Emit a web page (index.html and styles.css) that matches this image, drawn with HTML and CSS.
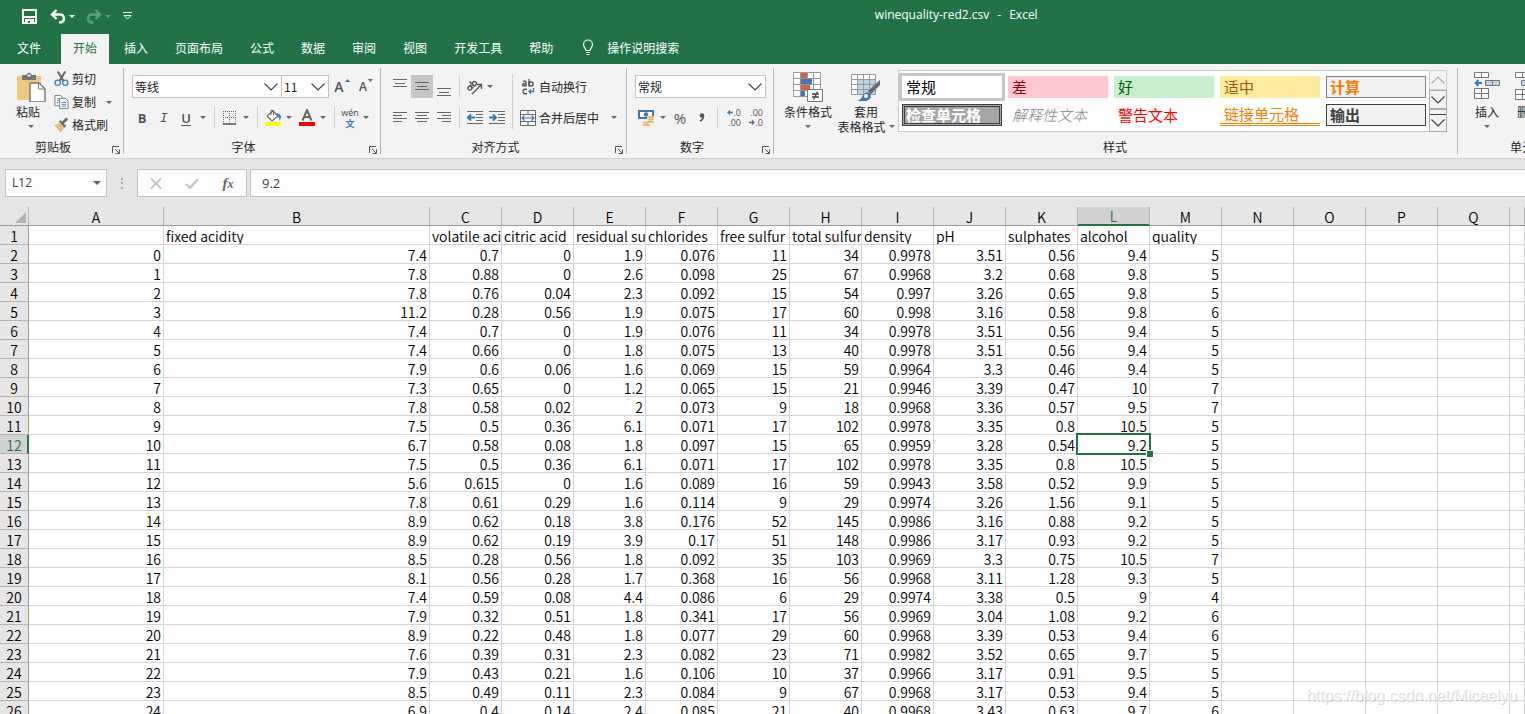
FILE: index.html
```html
<!DOCTYPE html>
<html lang="zh-CN">
<head>
<meta charset="utf-8">
<title>winequality-red2.csv - Excel</title>
<link rel="stylesheet" href="styles.css">
</head>
<body>
<div class="app">
  <header class="titlebar">
    <div class="quick">
      <button class="quick-btn save" aria-label="保存"><svg width="15" height="15" viewBox="0 0 15 15"><path d="M1 1h13v13H1z" fill="none" stroke="#fff" stroke-width="2"/><path d="M1 8h13M4 11h7v3H4z" stroke="#fff" stroke-width="2" fill="#fff"/><path d="M6 12h2v2H6z" fill="#217346"/></svg></button>
      <button class="quick-btn" aria-label="撤消"><svg width="16" height="15" viewBox="0 0 16 15"><path d="M6.500 1L2 5.500 6.500 10M2 5.500h7.500q4.500 0 4.500 4t-5 4" fill="none" stroke="#fff" stroke-width="2.400"/></svg><i class="caret light"></i></button>
      <button class="quick-btn faded" aria-label="恢复"><svg width="16" height="15" viewBox="0 0 16 15"><path d="M9.500 1L14 5.500 9.500 10M14 5.500H6.500q-4.500 0-4.500 4t5 4" fill="none" stroke="#fff" stroke-width="2.400"/></svg><i class="caret light"></i></button>
      <button class="quick-btn more" aria-label="自定义"><svg width="9" height="8" viewBox="0 0 9 8"><path d="M0 .5h9M1 3.500h7L4.500 7z" fill="none" stroke="#fff"/></svg></button>
    </div>
    <div class="title">winequality-red2.csv<span>-</span>Excel</div>
  </header>

  <nav class="tabs">
    <button class="tab file">文件</button>
    <button class="tab active">开始</button>
    <button class="tab">插入</button>
    <button class="tab">页面布局</button>
    <button class="tab">公式</button>
    <button class="tab">数据</button>
    <button class="tab">审阅</button>
    <button class="tab">视图</button>
    <button class="tab">开发工具</button>
    <button class="tab">帮助</button>
    <button class="tab tell"><svg width="12" height="17" viewBox="0 0 12 17"><path d="M4 11.500c0-2-2.500-3-2.500-6a4.500 4.500 0 0 1 9 0c0 3-2.500 4-2.500 6zM4 13.500h4M4.500 15.500h3" fill="none" stroke="#fff" stroke-width="1.200"/></svg>操作说明搜索</button>
  </nav>

  <section class="ribbon">
    <div class="group clipboard">
      <div class="group-body">
        <button class="big paste"><svg width="30" height="30" viewBox="0 0 30 30"><path d="M1 4h24v24H1z" fill="#edc87e"/><path d="M6 3h4q3-5 6 0h4v5H6z" fill="#767676"/><path d="M11.500 2.500h3v2h-3z" fill="#f3f3f3"/><path d="M14 11h9l6 6v13H14z" fill="#fff" stroke="#767676" stroke-width="1.400"/><path d="M22.500 11v6H29" fill="none" stroke="#767676"/></svg><span>粘贴</span><i class="caret"></i></button>
        <div class="stack">
          <button class="small"><svg width="15" height="16" viewBox="0 0 16 16"><path d="M4 0l6 10M12 0L6 10" stroke="#6b6b6b" stroke-width="2.200"/><circle cx="4" cy="12" r="2.800" fill="none" stroke="#4a7ebb" stroke-width="1.500"/><circle cx="12" cy="12" r="2.800" fill="none" stroke="#4a7ebb" stroke-width="1.500"/></svg>剪切</button>
          <button class="small"><svg width="15" height="16" viewBox="0 0 16 16"><path d="M1 1h6l2 2v9H1z" fill="#fff" stroke="#767676"/><path d="M6 4h6l3 3v8H6z" fill="#fff" stroke="#767676"/><path d="M3 4.500h3M3 6.500h2M3 8.500h2M8 8.500h5M8 10.500h5M8 12.500h5" stroke="#4a7ebb"/></svg>复制<i class="caret gap"></i></button>
          <button class="small"><svg width="15" height="16" viewBox="0 0 16 16"><path d="M0 8l6-2 5 5-4 5z" fill="#edc07a"/><path d="M5 4l2-1 6 6-2 2z" fill="#6b6b6b"/><path d="M9 6l5-5" stroke="#6b6b6b" stroke-width="3"/></svg>格式刷</button>
        </div>
      </div>
      <div class="group-label">剪贴板</div>
      <button class="launcher" aria-label="剪贴板设置"><svg width="8" height="8" viewBox="0 0 8 8"><path d="M.5 7V.5H7M3 3l4 4M7.500 3.500v4h-4" fill="none" stroke="#555"/></svg></button>
    </div>

    <div class="group font">
      <div class="group-body rows">
        <div class="row">
          <label class="combo font-name"><select aria-label="字体"><option>等线</option></select><svg width="14" height="8" viewBox="0 0 14 8"><path d="M.5.5L7 7 13.500.5" fill="none" stroke="#444" stroke-width="1.200"/></svg></label>
          <label class="combo font-size"><select aria-label="字号"><option>11</option></select><svg width="14" height="8" viewBox="0 0 14 8"><path d="M.5.5L7 7 13.500.5" fill="none" stroke="#444" stroke-width="1.200"/></svg></label>
          <button class="tool grow" aria-label="增大字号">A<svg width="5" height="3" viewBox="0 0 5 3"><path d="M0 3L2.500 0 5 3z" fill="#3f6fa8"/></svg></button>
          <button class="tool grow shrink" aria-label="减小字号">A<svg width="5" height="3" viewBox="0 0 5 3"><path d="M0 0h5L2.500 3z" fill="#3f6fa8"/></svg></button>
        </div>
        <div class="row">
          <button class="tool letter"><b>B</b></button>
          <button class="tool letter"><em>I</em></button>
          <button class="tool letter"><u>U</u></button><i class="caret cell"></i>
          <span class="sep"></span>
          <button class="tool narrow" aria-label="边框"><svg width="14" height="14" viewBox="0 0 14 14"><path d="M.5 0v13M6.500 0v13M12.500 0v13M0 .5h13M0 6.500h13" stroke="#666" stroke-dasharray="1 1"/><path d="M0 13h13" stroke="#555" stroke-width="1.500"/></svg></button><i class="caret cell"></i>
          <span class="sep"></span>
          <button class="tool narrow" aria-label="填充颜色"><svg width="17" height="17" viewBox="0 0 17 17"><path d="M8 2l5 5-6 5-5-5z" fill="#fff" stroke="#666" stroke-width="1.200"/><path d="M6 6V1.500h2.500V6" fill="none" stroke="#666"/><path d="M12 4q4 1 4 4l-1 4q-1-4-3-5z" fill="#4a7ebb"/><path d="M0 13h16v4H0z" fill="#ff0"/></svg></button><i class="caret cell"></i>
          <button class="tool narrow after" aria-label="字体颜色"><svg width="16" height="17" viewBox="0 0 16 17"><path d="M3.500 11.500L8 1l4.500 10.500M5 8h6" fill="none" stroke="#666" stroke-width="2"/><path d="M0 13h16v4H0z" fill="#f00"/></svg></button><i class="caret cell"></i>
          <span class="sep"></span>
          <button class="tool narrow pinyin"><span>wén</span><strong>文</strong></button><i class="caret cell"></i>
        </div>
      </div>
      <div class="group-label">字体</div>
      <button class="launcher" aria-label="字体设置"><svg width="8" height="8" viewBox="0 0 8 8"><path d="M.5 7V.5H7M3 3l4 4M7.500 3.500v4h-4" fill="none" stroke="#555"/></svg></button>
    </div>

    <div class="group align">
      <div class="group-body">
        <div class="rows">
          <div class="row">
            <button class="tool" aria-label="顶端对齐"><svg class="high" width="14" height="9" viewBox="0 0 14 9"><path d="M0 .5h14M2 4.500h10M0 7.500h14" stroke="#666"/></svg></button>
            <button class="tool pressed" aria-label="垂直居中"><svg width="14" height="9" viewBox="0 0 14 9"><path d="M0 .5h14M2 4.500h10M0 7.500h14" stroke="#666"/></svg></button>
            <button class="tool" aria-label="底端对齐"><svg class="low" width="14" height="9" viewBox="0 0 14 9"><path d="M0 .5h14M2 4.500h10M0 7.500h14" stroke="#666"/></svg></button>
            <span class="sep tight"></span>
            <button class="tool narrow" aria-label="方向"><svg width="17" height="16" viewBox="0 0 17 16"><g fill="none" stroke="#555" stroke-width="1.400"><g transform="rotate(-45 6 7)"><circle cx="3" cy="7" r="2"/><path d="M5.300 4.500v5M7.500 2v7.500"/><circle cx="9.500" cy="7" r="2"/></g><path d="M6 15L15 6M11 5.500h4.500V10"/></g></svg></button><i class="caret cell"></i>
          </div>
          <div class="row">
            <button class="tool" aria-label="左对齐"><svg width="14" height="11" viewBox="0 0 14 11"><path d="M0 .5h14M0 3.500h9M0 6.500h14M0 9.500h9" stroke="#666"/></svg></button>
            <button class="tool" aria-label="居中"><svg width="14" height="11" viewBox="0 0 14 11"><path d="M0 .5h14M2 3.500h10M0 6.500h14M2 9.500h10" stroke="#666"/></svg></button>
            <button class="tool" aria-label="右对齐"><svg width="14" height="11" viewBox="0 0 14 11"><path d="M0 .5h14M5 3.500h9M0 6.500h14M5 9.500h9" stroke="#666"/></svg></button>
            <span class="sep tight"></span>
            <button class="tool" aria-label="减少缩进"><svg width="16" height="14" viewBox="0 0 16 14"><path d="M0 .5h16M9 3.500h7M9 6.500h7M9 9.500h7M0 12.500h16" stroke="#666"/><path d="M8 6.500H1M4 3.500l-3 3 3 3" fill="none" stroke="#3b76b5" stroke-width="2"/></svg></button>
            <button class="tool" aria-label="增加缩进"><svg width="16" height="14" viewBox="0 0 16 14"><path d="M0 .5h16M9 3.500h7M9 6.500h7M9 9.500h7M0 12.500h16" stroke="#666"/><path d="M0 6.500h7M4 3.500l3 3-3 3" fill="none" stroke="#3b76b5" stroke-width="2"/></svg></button>
          </div>
        </div>
        <span class="sep tall"></span>
        <div class="rows">
          <button class="small wide"><svg width="16" height="16" viewBox="0 0 16 16"><g fill="none" stroke="#555" stroke-width="1.400"><path d="M3 2.500q3-1 3 1V7.500M6 4.500q-3.500 0-3.500 1.500t3.500.5M9 0v7.500"/><circle cx="11" cy="5" r="2"/><path d="M7 10.500q-4-1-4 2t4 2"/></g><path d="M13.500 9v3.500H9.500M11 10.500l-2 2 2 2" fill="none" stroke="#3b76b5" stroke-width="1.300"/></svg>自动换行</button>
          <button class="small wide"><svg width="16" height="16" viewBox="0 0 16 16"><path d="M.5.500h15v15H.5zM.5 4.500h15M.5 11.500h15M8 0v4M8 12v4" fill="#fff" stroke="#666"/><path d="M2 8h12M4.500 5.500L2 8l2.500 2.500M11.500 5.500L14 8l-2.500 2.500" fill="none" stroke="#3b76b5" stroke-width="1.200"/></svg>合并后居中<i class="caret gap"></i></button>
        </div>
      </div>
      <div class="group-label">对齐方式</div>
      <button class="launcher" aria-label="对齐设置"><svg width="8" height="8" viewBox="0 0 8 8"><path d="M.5 7V.5H7M3 3l4 4M7.500 3.500v4h-4" fill="none" stroke="#555"/></svg></button>
    </div>

    <div class="group number">
      <div class="group-body rows">
        <label class="combo number-format"><select aria-label="数字格式"><option>常规</option></select><svg width="14" height="8" viewBox="0 0 14 8"><path d="M.5.5L7 7 13.500.5" fill="none" stroke="#444" stroke-width="1.200"/></svg></label>
        <div class="row">
          <button class="tool" aria-label="会计数字格式"><svg width="17" height="16" viewBox="0 0 17 16"><path d="M1 1h14v7H1z" fill="#fff" stroke="#3b76b5" stroke-width="2"/><circle cx="8" cy="4.500" r="2.200" fill="#3b76b5"/><path d="M9 6h8v8H9z" fill="#f3f3f3"/><g fill="#e8b96a"><ellipse cx="12.500" cy="7" rx="3.500" ry="1.200"/><ellipse cx="12.500" cy="9.500" rx="3.500" ry="1"/><ellipse cx="12.500" cy="12" rx="3.500" ry="1"/><ellipse cx="8" cy="12.500" rx="3.500" ry="1"/><ellipse cx="8.500" cy="15" rx="4" ry="1"/></g></svg></button><i class="caret cell"></i>
          <button class="tool percent">%</button>
          <button class="tool" aria-label="千位分隔样式"><svg width="6" height="9" viewBox="0 0 6 9"><circle cx="3" cy="2.500" r="2.300" fill="#555"/><path d="M4.500 2.500q0 4-3.500 5.500" fill="none" stroke="#555" stroke-width="1.500"/></svg></button>
          <span class="sep tight"></span>
          <button class="tool decimal"><span><svg width="6" height="5" viewBox="0 0 6 5"><path d="M6 2.500H1M3 .5l-2 2 2 2" fill="none" stroke="#3b76b5" stroke-width="1.300"/></svg>.0</span><span>.00</span></button>
          <button class="tool decimal"><span>.00</span><span><svg width="6" height="5" viewBox="0 0 6 5"><path d="M0 2.500h5M3 .5l2 2-2 2" fill="none" stroke="#3b76b5" stroke-width="1.300"/></svg>.0</span></button>
        </div>
      </div>
      <div class="group-label">数字</div>
      <button class="launcher" aria-label="数字设置"><svg width="8" height="8" viewBox="0 0 8 8"><path d="M.5 7V.5H7M3 3l4 4M7.500 3.500v4h-4" fill="none" stroke="#555"/></svg></button>
    </div>

    <div class="group styles">
      <div class="group-body">
        <button class="big cond"><svg width="30" height="30" viewBox="0 0 30 30"><path d="M.5.500h27v24H.5z" fill="#fff"/><path d="M.5.500h27v24H.5zM0 6.500h28M0 12.500h28M0 18.500h28M7.500 0v25M14.500 0v6M20.500 0v25" fill="none" stroke="#999"/><path d="M8 1h6v5H8zM8 13h9v5H8z" fill="#d9603f"/><path d="M8 7h11v5H8zM8 19h4v5H8z" fill="#3f78b5"/><path d="M14.500 17.500h15v12h-15z" fill="#fff" stroke="#777"/><path d="M19 22h7M19 25h7M24.500 19.500l-4 8" stroke="#444" stroke-width="1.300"/></svg><span>条件格式</span><i class="caret"></i></button>
        <button class="big format"><svg width="30" height="30" viewBox="0 0 30 30"><path d="M.5 2.500h24v20H.5z" fill="#fff"/><path d="M7 8h18v15H7z" fill="#bdd3ea"/><path d="M.5 2.500h24v20H.5zM0 7.500h25M0 12.500h25M0 17.500h25M6.500 2v21M12.500 2v21M18.500 2v21" fill="none" stroke="#999"/><path d="M29 8v5l-9 9-3-3z" fill="#6b6b6b"/><path d="M6 29q4-1 6-6 2-4 7-2 3 6-4 8z" fill="#3f78b5"/><circle cx="15" cy="24" r="2" fill="#fff"/></svg><span>套用</span><span class="second">表格格式<i class="caret"></i></span></button>
        <div class="gallery">
          <div class="swatches">
            <button class="swatch normal">常规</button>
            <button class="swatch bad">差</button>
            <button class="swatch good">好</button>
            <button class="swatch neutral">适中</button>
            <button class="swatch calc">计算</button>
            <button class="swatch check">检查单元格</button>
            <button class="swatch explain">解释性文本</button>
            <button class="swatch warn">警告文本</button>
            <button class="swatch linked">链接单元格</button>
            <button class="swatch output">输出</button>
          </div>
          <div class="scroller">
            <button class="scroll off" aria-label="上一行"><svg width="14" height="8" viewBox="0 0 14 8"><path d="M.5 7.500L7 1l6.500 6.500" fill="none" stroke="#aaa" stroke-width="1.200"/></svg></button>
            <button class="scroll" aria-label="下一行"><svg width="14" height="8" viewBox="0 0 14 8"><path d="M.5.500L7 7 13.500.5" fill="none" stroke="#444" stroke-width="1.200"/></svg></button>
            <button class="scroll" aria-label="其他"><svg width="16" height="13" viewBox="0 0 16 13"><path d="M0 .5h16M1.500 5.500L8 12l6.500-6.500" fill="none" stroke="#444" stroke-width="1.200"/></svg></button>
          </div>
        </div>
      </div>
      <div class="group-label">样式</div>
    </div>

    <div class="group cells">
      <div class="group-body">
        <button class="big cell-btn"><svg width="28" height="30" viewBox="0 0 28 30"><path d="M1.500.500h14v5h-14zM8.500.500v5M1.500 16.500h14v10h-14zM1.500 21.500h14M8.500 16.500v10" fill="#fff" stroke="#777"/><path d="M12.500 8.500h14v5h-14zM19.500 8.500v5" fill="#bdd3ea" stroke="#777"/><path d="M9 11H3M5.500 8L2.500 11l3 3" fill="none" stroke="#3b76b5" stroke-width="1.800"/></svg><span>插入</span><i class="caret"></i></button>
        <button class="big cell-btn"><svg width="28" height="30" viewBox="0 0 28 30"><path d="M.5.500h14v5h-14zM7.500.500v5M.5 17.500h14v10h-14zM.5 22.500h14M7.500 17.500v10" fill="#fff" stroke="#777"/><path d="M6.500 8.500h14v5h-14z" fill="#bdd3ea" stroke="#777"/></svg><span>删除</span><i class="caret"></i></button>
      </div>
      <div class="group-label">单元格</div>
    </div>
  </section>

  <section class="formula-bar">
    <div class="name-box"><input type="text" value="L12" aria-label="名称框"><i class="caret big-caret"></i></div>
    <svg class="grip" width="2" height="11" viewBox="0 0 2 11"><path d="M0 0h2v2H0zM0 4h2v2H0zM0 9h2v2H0z" fill="#a8a8a8"/></svg>
    <div class="fx-box">
      <button aria-label="取消"><svg width="12" height="11" viewBox="0 0 12 11"><path d="M1 .5l10 10M11 .5l-10 10" stroke="#c4c4c4" stroke-width="1.800"/></svg></button>
      <button aria-label="输入"><svg width="14" height="11" viewBox="0 0 14 11"><path d="M1 6l4 4 8-9" fill="none" stroke="#c4c4c4" stroke-width="2.400"/></svg></button>
      <button class="fx">f<small>x</small></button>
    </div>
    <input class="formula" type="text" value="9.2" aria-label="编辑栏">
  </section>

  <main class="sheet">
    <table class="grid">
      <colgroup><col class="c-head"><col class="c-a"><col class="c-b"><col span="15" class="c-n"><col></colgroup>
      <thead><tr id="letters"></tr></thead>
      <tbody id="rows"></tbody>
    </table>
  </main>
  <div class="watermark">https://blog.csdn.net/Micaelyu</div>
</div>
<script src="sheet.js"></script>
</body>
</html>
```

FILE: styles.css
```css
* { box-sizing: border-box; }

body {
  margin: 0;
  overflow: hidden;
  font: 12px/16px "Noto Sans CJK SC", sans-serif;
  color: #262626;
  background: #e6e6e6;
}

button, input, select {
  font: inherit;
  color: inherit;
  margin: 0;
  padding: 0;
  border: 0;
  background: none;
  border-radius: 0;
}

button { white-space: nowrap; }
svg { display: block; flex: none; }

.app {
  position: relative;
  height: 100vh;
  display: flex;
  flex-direction: column;
  overflow: hidden;
}

.caret {
  display: block;
  flex: none;
  width: 0;
  height: 0;
  border: 3px solid transparent;
  border-top-color: #666;
  border-bottom: 0;
}
.caret.light { border-top-color: #fff; }
.caret.cell { margin: 0 3px; }
.caret.gap { margin-left: 7px; }

/* title bar */
.titlebar {
  flex: none;
  height: 34px;
  display: flex;
  align-items: center;
  background: #217346;
  color: #fff;
}
.titlebar::after { content: ""; flex: 4; }
.quick { display: flex; align-items: center; flex: 7; padding: 0 0 2px 22px; gap: 11px; }
.quick-btn { display: flex; align-items: center; gap: 3px; }
.quick-btn.save { margin-right: 2px; }
.quick-btn.faded { opacity: 0.3; }
.quick-btn.more { margin-left: 1px; }
.title { flex: none; font-family: "Open Sans", sans-serif; padding-bottom: 4px; }
.title span { margin: 0 8px; }

/* tabs */
.tabs {
  flex: none;
  height: 30px;
  display: flex;
  gap: 3px;
  padding-left: 5px;
  background: #217346;
  color: #fff;
}
.tab { padding: 0 12px 3px; }
.tab.file { margin-right: 5px; }
.tab.active { background: #f3f3f3; color: #217346; }
.tab.tell { display: flex; align-items: center; gap: 13px; padding-left: 14px; }

/* ribbon */
.ribbon {
  flex: none;
  height: 95px;
  display: flex;
  padding: 4px 0;
  background: #f3f3f3;
  border-bottom: 1px solid #d0d0d0;
  overflow: hidden;
}
.group {
  position: relative;
  flex: none;
  display: flex;
  flex-direction: column;
  border-right: 1px solid #b4b4b4;
}
.group-body { display: flex; flex: 1; }
.group-label { text-align: center; height: 15px; line-height: 16px; padding-right: 8px; }
.launcher { position: absolute; right: 3px; bottom: 0; }

.rows { display: flex; flex-direction: column; gap: 8px; padding-top: 7px; }
.row { display: flex; align-items: center; height: 23px; }
.stack { display: flex; flex-direction: column; gap: 1px; }
.small { display: flex; align-items: center; height: 22px; gap: 3px; }
.tool {
  width: 22px;
  height: 23px;
  display: flex;
  align-items: center;
  justify-content: center;
  color: #555;
}
.tool.narrow { width: 20px; }
.tool.after { margin-left: 2px; }
.tool.pressed { background: #c6c6c6; }
.high { margin-bottom: 7px; }
.low { margin-top: 11px; }
.sep { width: 1px; height: 21px; margin: 0 5px; background: #d0d0d0; }
.sep.tight { margin: 0 4px; }
.sep.tall { height: 55px; margin: 6px 4px 0; }

.big {
  display: flex;
  flex-direction: column;
  align-items: center;
  padding-top: 4px;
  line-height: 15px;
}
.big span { margin-top: 2px; }
.big .caret { margin-top: 6px; }

.clipboard { width: 124px; }
.clipboard .group-label { padding-right: 17px; }
.font .group-label, .align .group-label, .number .group-label { padding-right: 24px; }
.paste { width: 30px; margin-left: 16px; }
.paste span { margin-left: -6px; }
.paste .caret { margin-left: -1px; }
.clipboard .stack { margin-left: 8px; }

.font { width: 257px; padding-left: 7px; }
.combo {
  display: grid;
  align-items: center;
  height: 23px;
  border: 1px solid #c2c2c2;
  background: #fff;
}
.combo select, .combo svg { grid-area: 1 / 1; }
.combo select { appearance: none; width: 100%; height: 21px; padding-left: 2px; color: #222; }
.combo svg { justify-self: end; margin-right: 3px; pointer-events: none; }
.font-name { width: 150px; margin-left: 1px; }
.font-size { width: 48px; margin-left: -1px; }
.grow { margin-left: 2px; gap: 1px; font: 600 14px/16px "Open Sans", sans-serif; }
.grow svg { align-self: flex-start; margin-top: 4px; }
.shrink { font-size: 12px; }
.letter { font: 13px/16px "Open Sans", sans-serif; }
.letter em { font-family: "DejaVu Sans Mono", monospace; }
.letter u { font-weight: 600; text-underline-offset: 2px; }
.pinyin { flex-direction: column; font: 9px/11px "Noto Sans", sans-serif; }
.pinyin strong { font: 700 9px/11px "Noto Sans CJK SC", sans-serif; color: #3b76b5; }

.align { width: 246px; padding-left: 8px; }
.small.wide { height: 23px; padding-left: 3px; }
.wide .caret.gap { margin-left: 9px; }

.number { width: 147px; padding-left: 8px; }
.number-format { width: 131px; }
.percent { font: 15px/16px "Open Sans", sans-serif; }
.decimal { flex-direction: column; font: 9px/10px "Open Sans", sans-serif; align-items: flex-end; padding-right: 3px; }
.decimal span { display: flex; align-items: center; }

.styles { width: 684px; padding-left: 7px; }
.cond { width: 54px; }
.format { width: 60px; margin-left: 1px; }
.format .second { display: flex; align-items: center; gap: 3px; margin-top: 0; }
.format .caret { margin-top: 0; }
.gallery { display: flex; margin: 2px 0 7px 2px; border: 1px solid #c8c8c8; background: #fff; }
.swatches {
  display: grid;
  grid-template-columns: repeat(5, 100px);
  grid-auto-rows: 22px;
  gap: 6px;
  padding: 5px 3px;
}
.swatch { text-align: left; padding-left: 4px; font-size: 15px; line-height: 20px; color: #000; }
.normal { box-shadow: 0 0 0 3px #c6c6c6; }
.bad { background: #ffc7ce; color: #9c0006; }
.good { background: #c6efce; color: #006100; }
.neutral { background: #ffeb9c; color: #9c5700; }
.calc { background: #f2f2f2; color: #fa7d00; font-weight: 700; border: 1px solid #7f7f7f; padding-left: 3px; line-height: 18px; }
.check {
  background: #a5a5a5;
  color: #fff;
  font-weight: 700;
  border: 3px double #3f3f3f;
  line-height: 16px;
  padding-left: 1px;
}
.explain { color: #7f7f7f; font-style: italic; font-weight: 300; }
.warn { color: #f00; }
.linked { color: #fa7d00; border-bottom: 3px double #ff8001; }
.output { background: #f2f2f2; color: #3f3f3f; font-weight: 700; border: 1px solid #3f3f3f; padding-left: 3px; line-height: 18px; }
.scroller { display: grid; grid-template-rows: 20px 19px 1fr; width: 17px; margin: -1px -1px -1px 0; }
.scroll { display: flex; align-items: center; justify-content: center; background: #f3f3f3; border: 1px solid #ababab; }
.scroll.off { border-color: #d0d0d0; }

.cells { width: 141px; padding-left: 8px; }
.cell-btn { width: 42px; }

/* formula bar */
.formula-bar {
  flex: none;
  display: flex;
  align-items: center;
  padding: 10px 0 10px 5px;
  font-family: "Open Sans", sans-serif;
  color: #444;
}
.name-box, .fx-box, .formula { height: 28px; background: #fdfdfd; border: 1px solid #c2c2c2; }
.name-box { display: flex; align-items: center; width: 102px; padding: 0 5px 0 6px; }
.name-box input { flex: 1; min-width: 0; }
.big-caret { border-width: 4px 4px 0; }
.grip { margin: 0 14px; }
.fx-box { display: flex; width: 110px; }
.fx-box button { flex: 1; display: flex; align-items: center; justify-content: center; }
.fx-box .fx { font: italic 700 15px/16px "Liberation Serif", serif; color: #666; }
.fx small { font-size: 12px; align-self: flex-end; margin-bottom: 4px; }
.formula { flex: 1; min-width: 0; margin-left: 3px; padding-left: 11px; border-right: 0; font-size: 13px; }

/* sheet */
.sheet { flex: 1; min-height: 0; overflow: hidden; }
.grid {
  width: 100%;
  table-layout: fixed;
  border-collapse: separate;
  border-spacing: 0;
  background: #fff;
  font-size: 14px;
  color: #000;
}
.c-head { width: 29px; }
.c-a { width: 135px; }
.c-b { width: 266px; }
.c-n { width: 72px; }
.grid th, .grid td {
  height: 19px;
  line-height: 16px;
  padding: 2px 2px 0;
  font-weight: 350;
  white-space: nowrap;
  overflow: hidden;
  border-right: 1px solid #d4d4d4;
  border-bottom: 1px solid #d4d4d4;
}
.grid td { text-align: right; }
.grid tbody tr:first-child td { text-align: left; }
.grid th { background: #e6e6e6; border-color: #b4b4b4; }
.grid thead th { border-bottom-color: #999; }
.grid tbody th { border-right-color: #999; }
.grid thead th.current { background: #d2d2d2; color: #217346; border-bottom: 2px solid #217346; line-height: 15px; }
.grid tbody th.current { background: #d2d2d2; color: #217346; border-right: 2px solid #217346; padding-right: 1px; }
.corner svg { margin-left: auto; }
.grid td.selected { position: relative; overflow: visible; }
.selected::before {
  content: "";
  position: absolute;
  inset: -2px;
  border: 2px solid #217346;
}
.selected::after {
  content: "";
  position: absolute;
  right: -4px;
  bottom: -4px;
  width: 6px;
  height: 6px;
  background: #217346;
  border: 1px solid #fff;
  border-width: 1px 0 0 1px;
}

.watermark {
  position: absolute;
  right: 8px;
  bottom: 9px;
  font: 16px/18px "Liberation Sans", sans-serif;
  color: rgba(255, 255, 255, 0.7);
  text-shadow: 1px 1px 1px rgba(0, 0, 0, 0.2);
}
```

FILE: sheet.js
```js
const lines = `
|fixed acidity|volatile acidity|citric acid|residual sugar|chlorides|free sulfur dioxide|total sulfur dioxide|density|pH|sulphates|alcohol|quality
0|7.4|0.7|0|1.9|0.076|11|34|0.9978|3.51|0.56|9.4|5
1|7.8|0.88|0|2.6|0.098|25|67|0.9968|3.2|0.68|9.8|5
2|7.8|0.76|0.04|2.3|0.092|15|54|0.997|3.26|0.65|9.8|5
3|11.2|0.28|0.56|1.9|0.075|17|60|0.998|3.16|0.58|9.8|6
4|7.4|0.7|0|1.9|0.076|11|34|0.9978|3.51|0.56|9.4|5
5|7.4|0.66|0|1.8|0.075|13|40|0.9978|3.51|0.56|9.4|5
6|7.9|0.6|0.06|1.6|0.069|15|59|0.9964|3.3|0.46|9.4|5
7|7.3|0.65|0|1.2|0.065|15|21|0.9946|3.39|0.47|10|7
8|7.8|0.58|0.02|2|0.073|9|18|0.9968|3.36|0.57|9.5|7
9|7.5|0.5|0.36|6.1|0.071|17|102|0.9978|3.35|0.8|10.5|5
10|6.7|0.58|0.08|1.8|0.097|15|65|0.9959|3.28|0.54|9.2|5
11|7.5|0.5|0.36|6.1|0.071|17|102|0.9978|3.35|0.8|10.5|5
12|5.6|0.615|0|1.6|0.089|16|59|0.9943|3.58|0.52|9.9|5
13|7.8|0.61|0.29|1.6|0.114|9|29|0.9974|3.26|1.56|9.1|5
14|8.9|0.62|0.18|3.8|0.176|52|145|0.9986|3.16|0.88|9.2|5
15|8.9|0.62|0.19|3.9|0.17|51|148|0.9986|3.17|0.93|9.2|5
16|8.5|0.28|0.56|1.8|0.092|35|103|0.9969|3.3|0.75|10.5|7
17|8.1|0.56|0.28|1.7|0.368|16|56|0.9968|3.11|1.28|9.3|5
18|7.4|0.59|0.08|4.4|0.086|6|29|0.9974|3.38|0.5|9|4
19|7.9|0.32|0.51|1.8|0.341|17|56|0.9969|3.04|1.08|9.2|6
20|8.9|0.22|0.48|1.8|0.077|29|60|0.9968|3.39|0.53|9.4|6
21|7.6|0.39|0.31|2.3|0.082|23|71|0.9982|3.52|0.65|9.7|5
22|7.9|0.43|0.21|1.6|0.106|10|37|0.9966|3.17|0.91|9.5|5
23|8.5|0.49|0.11|2.3|0.084|9|67|0.9968|3.17|0.53|9.4|5
24|6.9|0.4|0.14|2.4|0.085|21|40|0.9968|3.43|0.63|9.7|6`.slice(1).split("\n");

const letters = [..."ABCDEFGHIJKLMNOPQ", ""];
const active = { row: 12, column: 11 };

const corner = '<th class="corner"><svg width="11" height="11" viewBox="0 0 11 11"><path d="M11 0v11H0z" fill="#b4b4b4"/></svg></th>';
document.getElementById("letters").innerHTML = corner + letters
  .map((l, i) => `<th scope="col"${i === active.column ? ' class="current"' : ""}>${l}</th>`).join("");

document.getElementById("rows").innerHTML = lines.map((line, r) => {
  const values = line.split("|");
  const current = r + 1 === active.row;
  const cells = letters.map((_, c) =>
    `<td${current && c === active.column ? ' class="selected"' : ""}>${values[c] ?? ""}</td>`).join("");
  return `<tr><th scope="row"${current ? ' class="current"' : ""}>${r + 1}</th>${cells}</tr>`;
}).join("");
```
